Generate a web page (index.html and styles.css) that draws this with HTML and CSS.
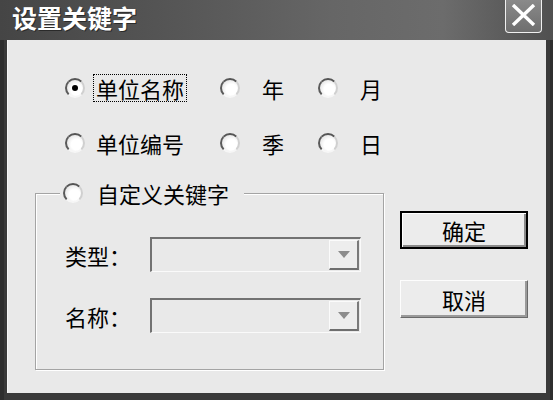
FILE: index.html
```html
<!DOCTYPE html>
<html lang="zh-CN">
<head>
<meta charset="utf-8">
<title>设置关键字</title>
<link rel="stylesheet" href="styles.css">
</head>
<body>
<div class="window">
  <div class="titlebar">
    <span class="title">设置关键字</span>
    <span class="close">
      <svg width="25" height="22" viewBox="0 0 25 22"><path d="M2 1 L23 21 M23 1 L2 21" stroke="#fff" stroke-width="3.4" fill="none"/></svg>
    </span>
  </div>
  <div class="frame">
    <div class="client">
      <div class="left">
        <div class="radio-row">
          <label class="opt"><span class="radio checked"></span><span class="lbl first focus">单位名称</span></label>
          <label class="opt"><span class="radio"></span><span class="lbl">年</span></label>
          <label class="opt"><span class="radio"></span><span class="lbl">月</span></label>
        </div>
        <div class="radio-row second">
          <label class="opt"><span class="radio"></span><span class="lbl first">单位编号</span></label>
          <label class="opt"><span class="radio"></span><span class="lbl">季</span></label>
          <label class="opt"><span class="radio"></span><span class="lbl">日</span></label>
        </div>
        <fieldset class="group">
          <legend class="legend"><span class="radio"></span><span class="lbl legend-lbl">自定义关键字</span></legend>
          <div class="field">
            <span class="flabel">类型：</span>
            <div class="combo"><span class="drop"><span class="tri"></span></span></div>
          </div>
          <div class="field second-field">
            <span class="flabel">名称：</span>
            <div class="combo"><span class="drop"><span class="tri"></span></span></div>
          </div>
        </fieldset>
      </div>
      <div class="buttons">
        <div class="btn default">确定</div>
        <div class="btn">取消</div>
      </div>
    </div>
  </div>
</div>
</body>
</html>
```

FILE: styles.css
```css
* { box-sizing: border-box; }
html, body { margin: 0; padding: 0; }
body {
  font-family: "Noto Sans CJK SC", "Noto Sans", sans-serif;
  color: #000;
  background: #3a3a3a;
}
.window {
  width: 553px;
  height: 400px;
  display: flex;
  flex-direction: column;
  background: #3a3a3a;
}
.titlebar {
  height: 40px;
  flex: none;
  display: flex;
  align-items: flex-start;
  background: linear-gradient(90deg, #454545 0%, #555 30%, #666 60%, #6c6c6c 80%, #505050 100%);
}
.title {
  padding: 0 0 0 12px;
  font-size: 25px;
  line-height: 34px;
  font-weight: 700;
  color: #fff;
  text-shadow: 1px 1px 0 #2a2a2a;
}
.close {
  margin-left: auto;
  margin-right: 11px;
  width: 37px;
  height: 33px;
  border: 1px solid #f0f0f0;
  border-top: none;
  border-radius: 0 0 4px 4px;
  background: linear-gradient(#8a8a8a, #6e6e6e);
  display: flex;
  align-items: center;
  justify-content: center;
  padding-bottom: 2px;
}
.frame {
  flex: 1;
  padding: 0 7px 7px 7px;
  background: #3a3a3a;
  box-shadow: inset 4px 0 0 #2e2e2e, inset -3px 0 0 #2e2e2e;
}
.client {
  height: 100%;
  background: #e9e9e9;
  display: flex;
  padding: 33px 0 0 28px;
  box-shadow: inset 1px 0 0 #f6f6f6;
}
.left {
  width: 349px;
  flex: none;
}
.radio-row {
  height: 30px;
  display: grid;
  grid-template-columns: 155px 98px auto;
  align-items: center;
  padding-left: 30px;
}
.radio-row.second { margin-top: 25px; }
.opt {
  display: flex;
  align-items: center;
}
.radio {
  width: 20px;
  height: 20px;
  flex: none;
  border-radius: 50%;
  border: 2px solid;
  border-color: #555 #d0d0d0 #f6f6f6 #5a5a5a;
  background: radial-gradient(circle at 60% 60%, #fff 0, #fff 40%, #e0e0e0 85%);
  position: relative;
}
.radio.checked::after {
  content: "";
  position: absolute;
  left: 5px;
  top: 5px;
  width: 6px;
  height: 6px;
  border-radius: 50%;
  background: #000;
}
.lbl {
  font-size: 22px;
  line-height: 26px;
  border: 1px dotted transparent;
  padding: 0 2px;
  margin-left: 19px;
  white-space: nowrap;
}
.lbl.first { margin-left: 8px; }
.lbl.focus { border-color: #000; }
.group {
  margin: 20px 0 0 0;
  padding: 29px 0 36px 29px;
  width: 349px;
  border: 1px solid #a4a4a4;
  box-shadow: 1px 1px 0 #fff, inset 1px 1px 0 #fff;
}
.legend {
  display: flex;
  align-items: center;
  height: 30px;
  margin-left: -5px;
  padding: 0 12px 0 3px;
  background: #e9e9e9;
}
.lbl.legend-lbl { margin-left: 11px; }
.field {
  display: flex;
  align-items: center;
  height: 35px;
}
.second-field { margin-top: 26px; }
.flabel {
  width: 85px;
  font-size: 22px;
  line-height: 26px;
  white-space: nowrap;
}
.combo {
  width: 211px;
  height: 35px;
  border-style: solid;
  border-width: 2px 1px 1px 2px;
  border-color: #727272 #fafafa #fafafa #727272;
  background: #e9e9e9;
  display: flex;
  justify-content: flex-end;
  padding: 1px 1px 1px 0;
}
.drop {
  width: 30px;
  height: 100%;
  border-style: solid;
  border-width: 1px 2px 2px 1px;
  border-color: #fbfbfb #7a7a7a #6e6e6e #fbfbfb;
  background: #ededed;
  display: flex;
  align-items: center;
  justify-content: center;
}
.tri {
  width: 0;
  height: 0;
  border-left: 6px solid transparent;
  border-right: 6px solid transparent;
  border-top: 7px solid #8c8c8c;
}
.buttons {
  margin-left: 16px;
  padding-top: 138px;
  display: flex;
  flex-direction: column;
  gap: 31px;
}
.btn {
  width: 128px;
  height: 38px;
  display: flex;
  align-items: center;
  justify-content: center;
  font-size: 22px;
  line-height: 26px;
  background: #ececec;
  border: 1px solid;
  border-color: #fdfdfd #6a6a6a #6a6a6a #fdfdfd;
  box-shadow: inset -2px -2px 0 #9a9a9a;
}
.btn.default {
  border: 2px solid #000;
  box-shadow: inset 1px 1px 0 #fff, inset -2px -2px 0 #8a8a8a;
}
```
